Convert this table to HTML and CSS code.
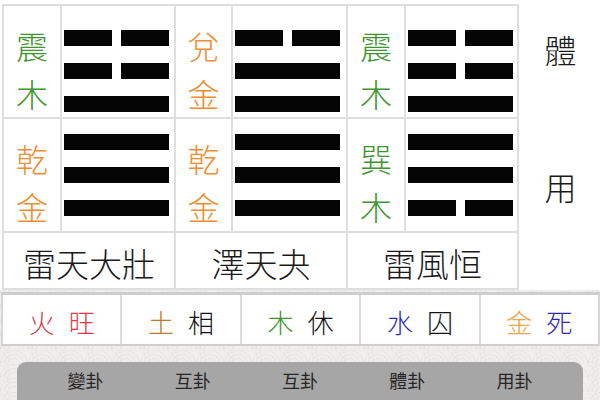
FILE: index.html
```html
<!DOCTYPE html>
<html lang="zh-Hant">
<head>
<meta charset="utf-8">
<link rel="stylesheet" href="styles.css">
</head>
<body>
<div class="top">
  <div class="grid">
    <div class="lab r1 green"><span>震</span><span>木</span></div>
    <div class="hex r1"><div class="yin"><i></i><i></i></div><div class="yin"><i></i><i></i></div><div class="yang"></div></div>
    <div class="lab r1 orange"><span>兌</span><span>金</span></div>
    <div class="hex r1"><div class="yin"><i></i><i></i></div><div class="yang"></div><div class="yang"></div></div>
    <div class="lab r1 green"><span>震</span><span>木</span></div>
    <div class="hex r1"><div class="yin"><i></i><i></i></div><div class="yin"><i></i><i></i></div><div class="yang"></div></div>

    <div class="lab r2 orange"><span>乾</span><span>金</span></div>
    <div class="hex r2"><div class="yang"></div><div class="yang"></div><div class="yang"></div></div>
    <div class="lab r2 orange"><span>乾</span><span>金</span></div>
    <div class="hex r2"><div class="yang"></div><div class="yang"></div><div class="yang"></div></div>
    <div class="lab r2 green"><span>巽</span><span>木</span></div>
    <div class="hex r2"><div class="yang"></div><div class="yang"></div><div class="yin"><i></i><i></i></div></div>

    <div class="name">雷天大壯</div>
    <div class="name">澤天夬</div>
    <div class="name">雷風恒</div>
  </div>
  <div class="side">
    <div class="side-a">體</div>
    <div class="side-b">用</div>
  </div>
</div>
<div class="wx">
  <div class="wx-cell"><span class="red">火</span><span class="red">旺</span></div>
  <div class="wx-cell"><span class="brown">土</span><span class="ink">相</span></div>
  <div class="wx-cell"><span class="green">木</span><span class="ink">休</span></div>
  <div class="wx-cell"><span class="blue">水</span><span class="ink">囚</span></div>
  <div class="wx-cell"><span class="gold">金</span><span class="blue">死</span></div>
</div>
<div class="tabs">
  <div class="tab">變卦</div>
  <div class="tab">互卦</div>
  <div class="tab">互卦</div>
  <div class="tab">體卦</div>
  <div class="tab">用卦</div>
</div>
</body>
</html>
```
FILE: styles.css
```css
html, body {
  margin: 0;
  padding: 0;
}
body {
  width: 600px;
  height: 400px;
  overflow: hidden;
  font-family: "Noto Sans CJK TC", "Noto Sans CJK SC", sans-serif;
  font-weight: 300;
  color: #1e1e1e;
  background-color: #efeeec;
  background-image:
    radial-gradient(circle at 50% 100%, transparent 0 5px, rgba(0,0,0,0.035) 5px 6px, transparent 6px 9px, rgba(0,0,0,0.035) 9px 10px, transparent 10px 13px, rgba(0,0,0,0.035) 13px 14px, transparent 14px),
    radial-gradient(circle at 0 50%, transparent 0 5px, rgba(0,0,0,0.03) 5px 6px, transparent 6px 9px, rgba(0,0,0,0.03) 9px 10px, transparent 10px);
  background-size: 28px 14px, 28px 14px;
}
.top {
  display: flex;
  background: #fff;
  padding-top: 4px;
  height: 286px;
}
.grid {
  margin-left: 2px;
  display: grid;
  grid-template-columns: 56px 112px 55px 113px 56px 111px;
  grid-template-rows: 111px 112px 55px;
  gap: 2px;
  padding: 2px;
  background: #dedede;
}
.lab, .hex, .name {
  background: #fff;
}
.lab {
  display: flex;
  flex-direction: column;
  align-items: center;
  justify-content: center;
  font-size: 32px;
  line-height: 48px;
}
.lab.r1 { padding-top: 15px; }
.lab.r2 { padding-top: 14px; }
.hex {
  display: flex;
  flex-direction: column;
  justify-content: center;
  gap: 17px;
  padding-left: 2px;
}
.hex.r1 { padding-top: 19px; }
.yang {
  width: 105px;
  height: 16px;
  background: #050505;
}
.yin {
  width: 105px;
  height: 16px;
  display: flex;
  justify-content: space-between;
}
.yin i {
  width: 48px;
  height: 16px;
  background: #050505;
}
.name {
  grid-column: span 2;
  display: flex;
  align-items: center;
  justify-content: center;
  padding-top: 5px;
  font-size: 33px;
  line-height: 44px;
  color: #1a1a1a;
}
.side {
  flex: 1;
  display: flex;
  flex-direction: column;
  align-items: center;
  font-size: 32px;
  line-height: 40px;
  color: #1a1a1a;
  padding-left: 2px;
}
.side-a { margin-top: 25px; }
.side-b { margin-top: 97px; }
.green { color: #3f9630; }
.orange { color: #ef8e35; }
.red { color: #dd3a46; }
.brown { color: #bf7a2c; }
.gold { color: #f0a347; }
.blue { color: #2c2cb0; }
.ink { color: #151515; }
.wx {
  margin-top: 2px;
  display: flex;
  background: #fff;
  border-top: 3px solid #cdcdcd;
  border-bottom: 2px solid #cfcfcf;
  border-left: 2px solid #d6d6d6;
  border-right: 2px solid #d6d6d6;
  margin-left: 1px;
  height: 49px;
}
.wx-cell {
  flex: 1;
  display: flex;
  align-items: center;
  justify-content: center;
  gap: 14px;
  padding-top: 5px;
  font-size: 26px;
  line-height: 36px;
}
.wx-cell + .wx-cell {
  border-left: 2px solid #dcdcdc;
}
.tabs {
  margin: 16px 17px 0 17px;
  height: 50px;
  background: #a6a6a6;
  border-radius: 9px 9px 0 0;
  display: flex;
  padding: 0 15px;
}
.tab {
  flex: 1;
  text-align: center;
  font-size: 18px;
  font-weight: 400;
  line-height: 36px;
  color: #262626;
}
```
